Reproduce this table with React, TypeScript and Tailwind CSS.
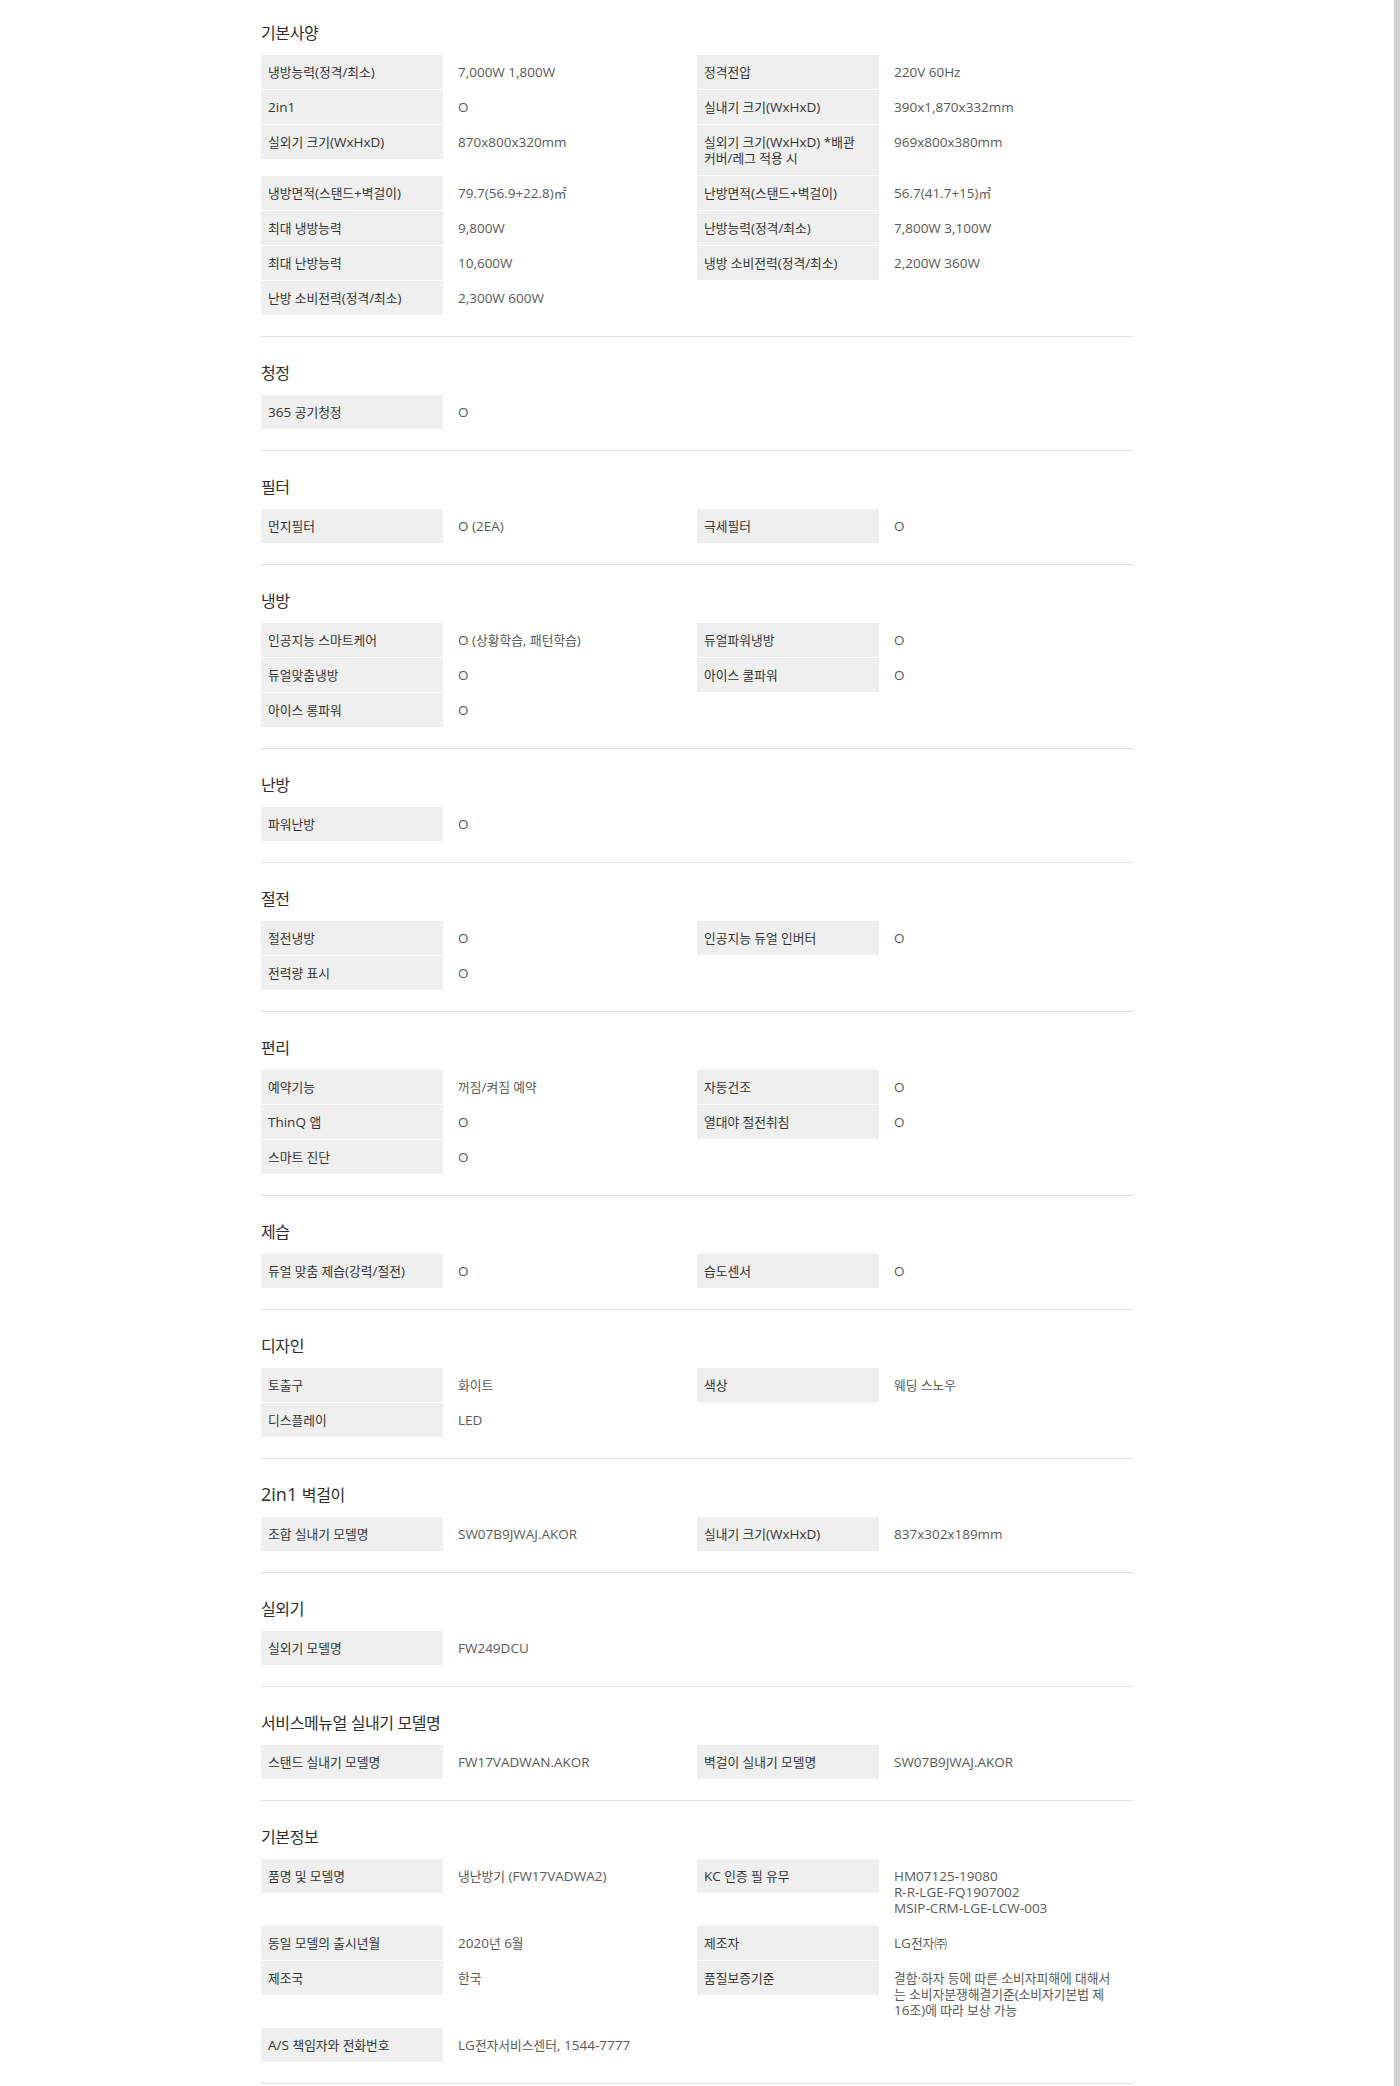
import React from "react";

type Val = string | string[];
type Item = { l: Val; v: Val };
type Row = [Item, Item?];
type Section = { title: string; rows: Row[] };

const sections: Section[] = [
  {
    title: "기본사양",
    rows: [
      [{ l: "냉방능력(정격/최소)", v: "7,000W 1,800W" }, { l: "정격전압", v: "220V 60Hz" }],
      [{ l: "2in1", v: "O" }, { l: "실내기 크기(WxHxD)", v: "390x1,870x332mm" }],
      [
        { l: "실외기 크기(WxHxD)", v: "870x800x320mm" },
        { l: ["실외기 크기(WxHxD) *배관", "커버/레그 적용 시"], v: "969x800x380mm" },
      ],
      [
        { l: "냉방면적(스탠드+벽걸이)", v: "79.7(56.9+22.8)㎡" },
        { l: "난방면적(스탠드+벽걸이)", v: "56.7(41.7+15)㎡" },
      ],
      [{ l: "최대 냉방능력", v: "9,800W" }, { l: "난방능력(정격/최소)", v: "7,800W 3,100W" }],
      [{ l: "최대 난방능력", v: "10,600W" }, { l: "냉방 소비전력(정격/최소)", v: "2,200W 360W" }],
      [{ l: "난방 소비전력(정격/최소)", v: "2,300W 600W" }],
    ],
  },
  { title: "청정", rows: [[{ l: "365 공기청정", v: "O" }]] },
  { title: "필터", rows: [[{ l: "먼지필터", v: "O (2EA)" }, { l: "극세필터", v: "O" }]] },
  {
    title: "냉방",
    rows: [
      [{ l: "인공지능 스마트케어", v: "O (상황학습, 패턴학습)" }, { l: "듀얼파워냉방", v: "O" }],
      [{ l: "듀얼맞춤냉방", v: "O" }, { l: "아이스 쿨파워", v: "O" }],
      [{ l: "아이스 롱파워", v: "O" }],
    ],
  },
  { title: "난방", rows: [[{ l: "파워난방", v: "O" }]] },
  {
    title: "절전",
    rows: [
      [{ l: "절전냉방", v: "O" }, { l: "인공지능 듀얼 인버터", v: "O" }],
      [{ l: "전력량 표시", v: "O" }],
    ],
  },
  {
    title: "편리",
    rows: [
      [{ l: "예약기능", v: "꺼짐/켜짐 예약" }, { l: "자동건조", v: "O" }],
      [{ l: "ThinQ 앱", v: "O" }, { l: "열대야 절전취침", v: "O" }],
      [{ l: "스마트 진단", v: "O" }],
    ],
  },
  { title: "제습", rows: [[{ l: "듀얼 맞춤 제습(강력/절전)", v: "O" }, { l: "습도센서", v: "O" }]] },
  {
    title: "디자인",
    rows: [
      [{ l: "토출구", v: "화이트" }, { l: "색상", v: "웨딩 스노우" }],
      [{ l: "디스플레이", v: "LED" }],
    ],
  },
  {
    title: "2in1 벽걸이",
    rows: [[{ l: "조합 실내기 모델명", v: "SW07B9JWAJ.AKOR" }, { l: "실내기 크기(WxHxD)", v: "837x302x189mm" }]],
  },
  { title: "실외기", rows: [[{ l: "실외기 모델명", v: "FW249DCU" }]] },
  {
    title: "서비스메뉴얼 실내기 모델명",
    rows: [[{ l: "스탠드 실내기 모델명", v: "FW17VADWAN.AKOR" }, { l: "벽걸이 실내기 모델명", v: "SW07B9JWAJ.AKOR" }]],
  },
  {
    title: "기본정보",
    rows: [
      [
        { l: "품명 및 모델명", v: "냉난방기 (FW17VADWA2)" },
        { l: "KC 인증 필 유무", v: ["HM07125-19080", "R-R-LGE-FQ1907002", "MSIP-CRM-LGE-LCW-003"] },
      ],
      [{ l: "동일 모델의 출시년월", v: "2020년 6월" }, { l: "제조자", v: "LG전자㈜" }],
      [
        { l: "제조국", v: "한국" },
        {
          l: "품질보증기준",
          v: ["결함·하자 등에 따른 소비자피해에 대해서", "는 소비자분쟁해결기준(소비자기본법 제", "16조)에 따라 보상 가능"],
        },
      ],
      [{ l: "A/S 책임자와 전화번호", v: "LG전자서비스센터, 1544-7777" }],
    ],
  },
];

const KO = /([\uAC00-\uD7A3\u3130-\u318F\u3200-\u33FF]+(?:\s+[\uAC00-\uD7A3\u3130-\u318F\u3200-\u33FF]+)*)/;

function Txt({ s, big }: { s: string; big?: boolean }) {
  const parts = s.split(KO);
  return (
    <>
      {parts.map((p, i) =>
        i % 2 === 1 ? (
          <span key={i} className={big ? "text-[16px] tracking-[-0.4px]" : "text-[12.75px]"}>
            {p}
          </span>
        ) : (
          <span key={i}>{p}</span>
        )
      )}
    </>
  );
}

function Lines({ v }: { v: Val }) {
  const arr = Array.isArray(v) ? v : [v];
  return (
    <>
      {arr.map((line, i) => (
        <div key={i} className="h-[16px] whitespace-nowrap leading-[16px]">
          <Txt s={line} />
        </div>
      ))}
    </>
  );
}

function Pair({ item }: { item?: Item }) {
  if (!item) return <div />;
  return (
    <div className="flex items-start">
      <div className="w-[182px] shrink-0 bg-[#efefef] px-[7px] py-[9px] text-[#333333]">
        <Lines v={item.l} />
      </div>
      <div className="flex-1 pl-[15px] py-[9px] text-[#5a5a5a]">
        <Lines v={item.v} />
      </div>
    </div>
  );
}

export default function App() {
  return (
    <div className="flex min-h-[2086px] bg-white font-['Open_Sans','Noto_Sans_CJK_KR',sans-serif] text-[13.5px]">
      <div className="flex flex-1 justify-center">
        <div className="w-[872px]">
          {sections.map((sec, i) => (
            <section
              key={sec.title}
              className={
                i === 0
                  ? "pt-[20px] pb-[21px] border-b border-[#e0e0e0]"
                  : "pt-[23px] pb-[21px] border-b border-[#e0e0e0]"
              }
            >
              <h3 className="mb-[11px] h-[24px] text-[18px] leading-[24px] text-[#2e2e2e]">
                <Txt s={sec.title} big />
              </h3>
              <div className="grid grid-cols-2 items-start gap-y-px">
                {sec.rows.map((r, j) => (
                  <React.Fragment key={j}>
                    <Pair item={r[0]} />
                    <Pair item={r[1]} />
                  </React.Fragment>
                ))}
              </div>
            </section>
          ))}
        </div>
      </div>
      <div className="w-[6px] shrink-0 self-stretch bg-[#d2d2d2]" />
    </div>
  );
}
